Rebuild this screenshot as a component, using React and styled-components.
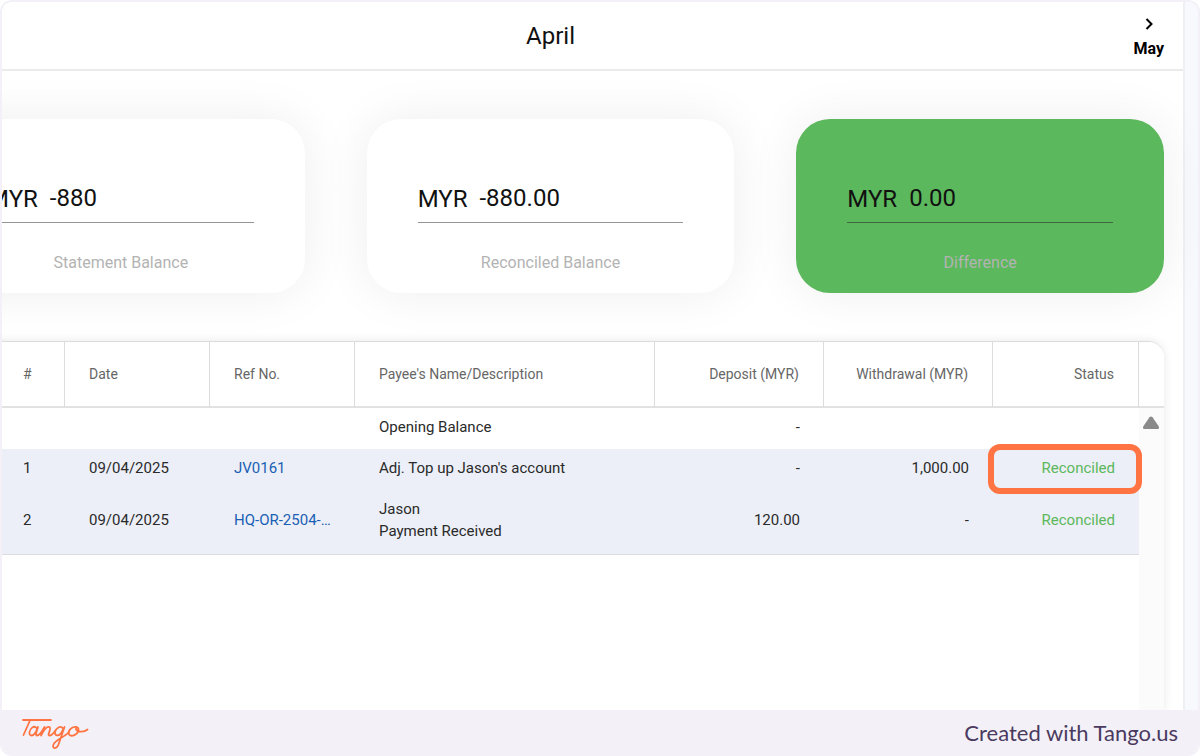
import React from "react";
import styled, { createGlobalStyle } from "styled-components";

const GlobalStyle = createGlobalStyle`
  * {
    box-sizing: border-box;
  }
  body {
    margin: 0;
    background: #fff;
    font-family: Roboto, "Liberation Sans", sans-serif;
    color: #2a2a2a;
  }
`;

const Frame = styled.div`
  min-height: 100vh;
  display: flex;
  flex-direction: column;
  border: 2px solid #f3f1f7;
  border-bottom: 0;
  border-radius: 12px;
  overflow: hidden;
`;

const Screen = styled.div`
  flex: 1;
  display: flex;
  background: #f7f9fd;
  overflow: hidden;
`;

/* the sheet is scrolled to the right, its left edge is cut off */
const Sheet = styled.main`
  flex: 1;
  min-width: 0;
  display: flex;
  flex-direction: column;
  margin-left: -85px;
  margin-right: 13px;
  background: #fff;
  border-right: 2px solid #efeff4;
`;

const MonthBar = styled.header`
  display: grid;
  grid-template-columns: 1fr auto 1fr;
  align-items: center;
  height: 69px;
  padding: 0 19px 0 20px;
  border-bottom: 2px solid #ebebeb;
`;

const Month = styled.h1`
  grid-column: 2;
  margin: 0;
  font-size: 24px;
  font-weight: 400;
  line-height: 32px;
  color: #111;
`;

const NextButton = styled.button`
  justify-self: end;
  display: flex;
  flex-direction: column;
  align-items: center;
  gap: 9px;
  padding: 5px 0 0;
  border: 0;
  background: none;
  color: #000;
  font: 700 16px/20px Roboto, sans-serif;
  cursor: pointer;
`;

const Cards = styled.section`
  display: grid;
  grid-template-columns: repeat(3, minmax(0, 1fr));
  gap: 62px;
  padding: 48px 19px 48px 20px;
`;

const Card = styled.div`
  height: 174px;
  padding: 60px 51px 0;
  border-radius: 34px;
  background: ${(props) => (props.$done ? "#5cb85c" : "#fff")};
  box-shadow: 0 0 50px rgba(0, 0, 0, 0.07);
`;

const Amount = styled.div`
  display: flex;
  align-items: center;
  gap: 12px;
  height: 44px;
  padding-bottom: 4px;
  border-bottom: 1px solid ${(props) => (props.$done ? "#3d6b3d" : "#949494")};
  font-size: 24px;
  color: #111;
  input {
    flex: 1;
    min-width: 0;
    padding: 0 0 2px;
    border: 0;
    outline: 0;
    background: none;
    font: inherit;
    color: inherit;
  }
`;

const CardLabel = styled.label`
  display: block;
  margin-top: 28px;
  text-align: center;
  font-size: 16px;
  line-height: 24px;
  color: #b3b3b3;
`;

const TableCard = styled.section`
  flex: 1;
  margin: 0 19px 0 20px;
  border-top: 1px solid #dcdcdc;
  border-top-right-radius: 16px;
  overflow: hidden;
  background: linear-gradient(#fbfbfb, #fbfbfb) right / 25px 100% no-repeat #fff;
  box-shadow: 0 0 10px rgba(0, 0, 0, 0.1);
`;

const Table = styled.table`
  width: 100%;
  table-layout: fixed;
  border-collapse: separate;
  border-spacing: 0;
`;

const Col = styled.col`
  width: ${(props) => props.$width};
`;

const Head = styled.th`
  height: 66px;
  padding: 0 24px;
  border-right: 1px solid #dcdcdc;
  border-bottom: 2px solid #e2e2e2;
  background: #fff;
  text-align: ${(props) => props.$align || "left"};
  font-size: 14px;
  font-weight: 400;
  color: #666;
  &:first-child {
    padding-left: 86px;
  }
  &:last-child {
    border-right: 0;
  }
`;

const Row = styled.tr`
  background: ${(props) => (props.$reconciled ? "#eceff7" : "#fff")};
  &:last-child td {
    padding-bottom: 12px;
    border-bottom: 1px solid #dcdcdc;
  }
`;

const Cell = styled.td`
  position: relative;
  padding: 8px 24px 11px;
  text-align: ${(props) => props.$align || "left"};
  font-size: 15px;
  line-height: 22px;
  overflow-wrap: break-word;
  &:first-child {
    padding-left: 86px;
  }
`;

const RefLink = styled.a`
  display: block;
  overflow: hidden;
  text-overflow: ellipsis;
  white-space: nowrap;
  color: #1a5fb4;
  text-decoration: none;
`;

const Status = styled.span`
  color: #5cb85c;
`;

const Highlight = styled.span`
  position: absolute;
  inset: -5px -3px -4px -5px;
  border: 6px solid #ff7442;
  border-radius: 12px;
  pointer-events: none;
  z-index: 1;
`;

const ScrollCell = styled.td`
  padding: 8px 3px 0;
  background: #fbfbfb;
  vertical-align: top;
  svg {
    display: block;
  }
`;

const Footer = styled.footer`
  display: flex;
  justify-content: space-between;
  align-items: center;
  height: 46px;
  padding: 0 20px 2px 18px;
  background: #f3f1f7;
  font-family: Lato, sans-serif;
  font-size: 22px;
  color: #4a3a60;
`;

const TangoLogo = () => (
  <svg width="72" height="36" viewBox="0 0 72 36" fill="none" stroke="#ff7442" strokeWidth="1.8" strokeLinecap="round" strokeLinejoin="round" role="img" aria-label="Tango">
    <path d="M3 6H31" />
    <path d="M10 6.500L3.500 21" />
    <path d="M16.500 14C14 11 9.800 14.500 9.400 18.500C9.200 22.500 13 22.500 15.500 18.500L18 13C16.500 17.500 15 21.500 17 21.500C20 21.500 22.500 16.500 24.500 13L21 21.500C23.500 16.500 27 12 29.500 13C32 14.500 26.500 21.500 29.500 21.500C32 21.500 33.500 19 35 17" />
    <path d="M43 14.500C40.500 11 36 14 35 18C34.500 22.500 39 22.500 41.500 18.500L44.500 13L39 29C37 36 31.500 35 33.500 30.500C35.500 26 44.500 23 49 18" />
    <path d="M56.500 13C51.500 12 47.500 17 49 20.500C51.500 23.500 57.500 20.500 58.500 16.500C59 14 57 12.500 56 14C55.500 18 63.500 19 67.500 15.500" />
  </svg>
);

const cards = [
  { id: "statement", label: "Statement Balance", value: "-880" },
  { id: "reconciled", label: "Reconciled Balance", value: "-880.00" },
  { id: "difference", label: "Difference", value: "0.00", done: true },
];

const rows = [
  { no: "", date: "", refNo: "", payee: ["Opening Balance"], deposit: "-", withdrawal: "", status: "" },
  {
    no: "1",
    date: "09/04/2025",
    refNo: "JV0161",
    payee: ["Adj. Top up Jason's account"],
    deposit: "-",
    withdrawal: "1,000.00",
    status: "Reconciled",
    highlight: true,
  },
  {
    no: "2",
    date: "09/04/2025",
    refNo: "HQ-OR-2504-0012",
    payee: ["Jason", "Payment Received"],
    deposit: "120.00",
    withdrawal: "-",
    status: "Reconciled",
  },
];

const App = () => {
  return (
    <>
      <GlobalStyle />
      <Frame>
        <Screen>
          <Sheet>
            <MonthBar>
              <Month>April</Month>
              <NextButton type="button">
                <svg width="10" height="12" viewBox="0 0 10 12" fill="none" stroke="currentColor" strokeWidth="2">
                  <path d="M2.500 1L7.500 6L2.500 11" />
                </svg>
                May
              </NextButton>
            </MonthBar>
            <Cards>
              {cards.map((card) => (
                <Card key={card.id} $done={card.done}>
                  <Amount $done={card.done}>
                    <span>MYR</span>
                    <input id={card.id} defaultValue={card.value} />
                  </Amount>
                  <CardLabel htmlFor={card.id}>{card.label}</CardLabel>
                </Card>
              ))}
            </Cards>
            <TableCard>
              <Table>
                <colgroup>
                  <Col $width="128px" />
                  <Col $width="145px" />
                  <Col $width="145px" />
                  <Col $width="auto" />
                  <Col $width="169px" />
                  <Col $width="169px" />
                  <Col $width="146px" />
                  <Col $width="25px" />
                </colgroup>
                <thead>
                  <tr>
                    <Head>#</Head>
                    <Head>Date</Head>
                    <Head>Ref No.</Head>
                    <Head>Payee's Name/Description</Head>
                    <Head $align="right">Deposit (MYR)</Head>
                    <Head $align="right">Withdrawal (MYR)</Head>
                    <Head $align="right">Status</Head>
                    <Head />
                  </tr>
                </thead>
                <tbody>
                  {rows.map((row, index) => (
                    <Row key={index} $reconciled={row.status !== ""}>
                      <Cell>{row.no}</Cell>
                      <Cell>{row.date}</Cell>
                      <Cell>{row.refNo && <RefLink href="#">{row.refNo}</RefLink>}</Cell>
                      <Cell>
                        {row.payee.map((line) => (
                          <div key={line}>{line}</div>
                        ))}
                      </Cell>
                      <Cell $align="right">{row.deposit}</Cell>
                      <Cell $align="right">{row.withdrawal}</Cell>
                      <Cell $align="right">
                        <Status>{row.status}</Status>
                        {row.highlight && <Highlight />}
                      </Cell>
                      {index === 0 && (
                        <ScrollCell rowSpan={rows.length}>
                          <svg width="18" height="14" viewBox="0 0 18 14" fill="#8a8a8a">
                            <path d="M7.500 1.200Q9 0 10.500 1.200L16.500 10Q18 13 15.500 13H2.500Q0 13 1.500 10Z" />
                          </svg>
                        </ScrollCell>
                      )}
                    </Row>
                  ))}
                </tbody>
              </Table>
            </TableCard>
          </Sheet>
        </Screen>
        <Footer>
          <TangoLogo />
          <span>Created with Tango.us</span>
        </Footer>
      </Frame>
    </>
  );
};

export default App;
